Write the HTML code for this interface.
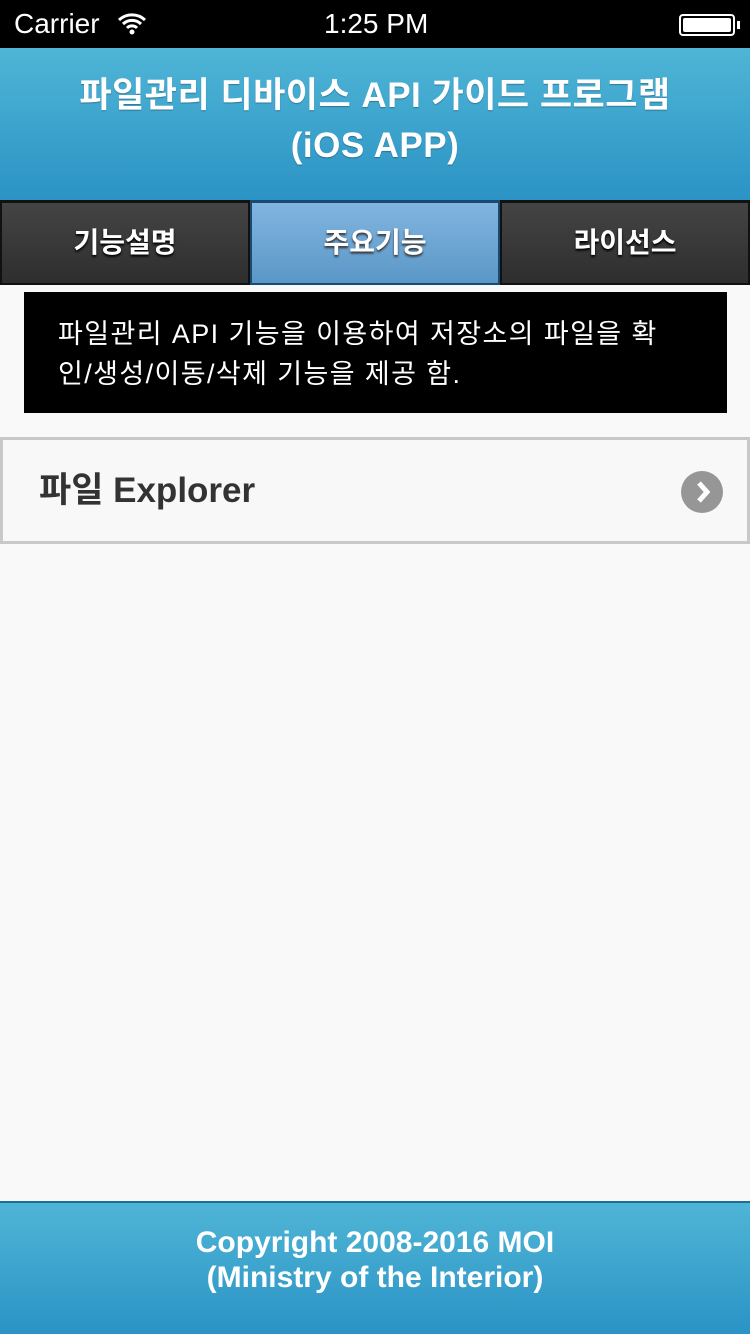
<!DOCTYPE html>
<html><head><meta charset="utf-8"><style>
*{margin:0;padding:0;box-sizing:border-box}
body{width:750px;height:1334px;background:#f9f9f9;font-family:"Liberation Sans","Noto Sans CJK KR",sans-serif;position:relative;overflow:hidden}
.sb{position:absolute;top:0;left:0;width:750px;height:48px;background:#000;color:#fff;font-size:28px}
.hd{position:absolute;top:48px;left:0;width:750px;height:152px;background:linear-gradient(#4fb5d6,#2b93c5);color:#fff;font-weight:bold;font-size:35px;letter-spacing:0.5px;text-align:center;line-height:50px;padding-top:23px;text-shadow:0 1px 1px rgba(0,0,0,.3)}
.tabs{position:absolute;top:200px;left:0;width:750px;height:85px;display:flex;background:#111}
.tab{flex:1;color:#fff;font-weight:bold;font-size:28px;text-align:center;line-height:80px;background:linear-gradient(#444,#2e2e2e);border:2px solid #111;border-top:3px solid #111;text-shadow:0 2px 2px #000}
.tab.on{background:linear-gradient(#82b5e0,#5a97c7);text-shadow:0 2px 2px #333;border-color:#1a4a70}
.desc{position:absolute;top:292px;left:24px;width:703px;height:121px;background:#000;color:#fff;font-size:27px;letter-spacing:1.4px;line-height:40px;padding:22px 0 0 34px;white-space:nowrap}
.row{position:absolute;top:437px;left:0;width:750px;height:107px;border:3px solid #c8c8c8;background:#f8f8f8;font-weight:bold;font-size:35px;color:#333;line-height:101px;padding-left:36px}
.arr{position:absolute;right:24px;top:31px;width:42px;height:42px;border-radius:50%;background:#969696}
.arr svg{display:block}
.ft{position:absolute;top:1201px;left:0;width:750px;height:133px;background:linear-gradient(#4fb5d6,#2b93c5);border-top:2px solid #1c6e99;color:#fff;font-weight:bold;font-size:30px;text-align:center;line-height:35px;padding-top:22px}
</style></head><body>
<div class="sb"><span style="position:absolute;left:14px;top:8px">Carrier</span>
<svg style="position:absolute;left:117px;top:12px" width="30" height="24" viewBox="0 0 30 24"><path d="M2 8a19 19 0 0 1 26 0M6 12a13 13 0 0 1 18 0M10 16a7 7 0 0 1 10 0" stroke="#fff" stroke-width="3" fill="none"/><circle cx="15" cy="20" r="2.5" fill="#fff"/></svg>
<span style="position:absolute;left:324px;top:8px;font-weight:500">1:25 PM</span>
<div style="position:absolute;left:679px;top:14px;width:56px;height:22px;border:2px solid #fff;border-radius:4px;padding:2px"><div style="background:#fff;height:100%;border-radius:2px"></div></div>
<div style="position:absolute;left:737px;top:21px;width:3px;height:8px;background:#fff"></div></div>
<div class="hd">파일관리 디바이스 API 가이드 프로그램<br>(iOS APP)</div>
<div class="tabs"><div class="tab">기능설명</div><div class="tab on">주요기능</div><div class="tab">라이선스</div></div>
<div class="desc">파일관리 API 기능을 이용하여 저장소의 파일을 확<br>인/생성/이동/삭제 기능을 제공 함.</div>
<div class="row">파일 Explorer<div class="arr"><svg width="42" height="42" viewBox="0 0 42 42"><path d="M18 12l8 9-8 9" stroke="#fff" stroke-width="5" fill="none"/></svg></div></div>
<div class="ft">Copyright 2008-2016 MOI<br>(Ministry of the Interior)</div>
</body></html>
